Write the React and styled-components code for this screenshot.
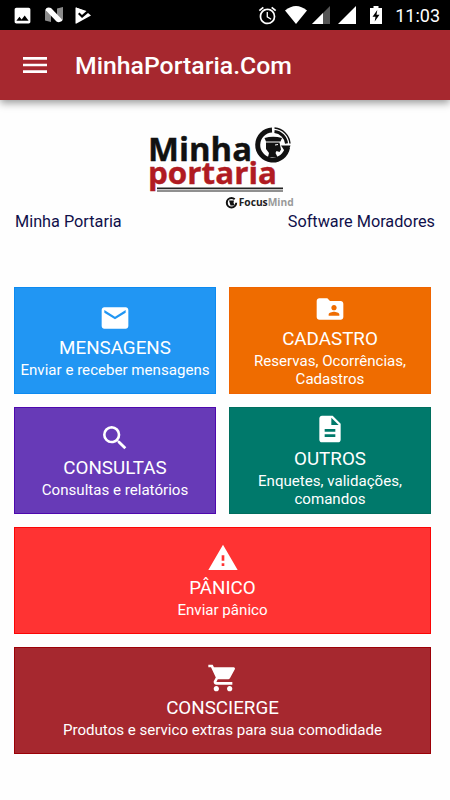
import React from "react"
import styled, { createGlobalStyle } from "styled-components"
import {
    MdMenu,
    MdEmail,
    MdFolderShared,
    MdSearch,
    MdDescription,
    MdWarning,
    MdShoppingCart,
    MdImage,
    MdAlarm,
} from "react-icons/md"

const tiles = [
    { title: "MENSAGENS", text: "Enviar e receber mensagens", color: "#2196f3", border: "#0d8af0", icon: MdEmail },
    { title: "CADASTRO", text: "Reservas, Ocorrências, Cadastros", color: "#ef6c00", border: "#ef6400", icon: MdFolderShared },
    { title: "CONSULTAS", text: "Consultas e relatórios", color: "#673ab7", border: "#4e08ae", icon: MdSearch },
    { title: "OUTROS", text: "Enquetes, validações, comandos", color: "#00796b", border: "#006e5e", icon: MdDescription },
    { title: "PÂNICO", text: "Enviar pânico", color: "#ff3333", border: "#fb0505", icon: MdWarning, wide: true },
    { title: "CONSCIERGE", text: "Produtos e servico extras para sua comodidade", color: "#a6282f", border: "#9b0007", icon: MdShoppingCart, wide: true },
]

function StatusBar() {
    return (
        <StatusContainer>
            <StatusGroup $gap="12px">
                <MdImage size={21} />
                <svg width="18" height="16" viewBox="0 0 18 16">
                    <path d="M0 2 L6 4 V15 L0 13.5Z M12 1.5 L18 0 V13.5 L12 12Z" fill="#8b8b8b" />
                    <path d="M1 1.5 Q3 0 6 1 L17 12.5 V14 Q14 16 11.5 14.5 L1 3.5Z" fill="#fff" />
                </svg>
                <svg width="17" height="17" viewBox="0 0 17 17">
                    <path d="M1 0.5 Q0.5 0.2 0.5 1 V16 Q0.5 17 1.5 16.5 L16 8.5 L13 6 L7 11 L3 7 L4.5 5.5 L7 8 L11.5 4 Z" fill="#fff" />
                    <path d="M1 0.5 L9.5 4 L7 6.5 L4.5 4.5 L1 7Z" fill="#fff" />
                </svg>
            </StatusGroup>
            <StatusGroup $gap="5px">
                <MdAlarm size={21} />
                <Wifi width="22" height="18" viewBox="0 0 22 18">
                    <path d="M0 4.5 Q11 -4.5 22 4.5 L11 18Z" fill="#fff" />
                </Wifi>
                <svg width="18" height="18" viewBox="0 0 18 18">
                    <path d="M0 18 L18 0 V18Z" fill="#555" />
                    <path d="M0 18 L11 7 V18Z" fill="#fff" />
                </svg>
                <SignalFull width="18" height="18" viewBox="0 0 18 18">
                    <path d="M0 18 L18 0 V18Z" fill="#fff" />
                </SignalFull>
                <Battery width="12" height="18" viewBox="0 0 12 18">
                    <path d="M3.5 0 H8.5 V2 H12 V18 H0 V2 H3.5Z" fill="#fff" />
                    <path d="M7.3 4 L2.5 10.7 H5.5 L4.7 15.5 L9.5 8.8 H6.5Z" fill="#000" />
                </Battery>
                <Clock>11:03</Clock>
            </StatusGroup>
        </StatusContainer>
    )
}

function Logo() {
    return (
        <svg width="150" height="90" viewBox="145 122 150 90" fontFamily="Open Sans, Noto Sans, sans-serif" fontWeight="700">
            <text x="148" y="184.3" fontSize="31" textLength="129" lengthAdjust="spacingAndGlyphs" fill="#b01b22" stroke="#b01b22" strokeWidth="0.4">portaria</text>
            <text x="148" y="161" fontSize="32" textLength="104" lengthAdjust="spacingAndGlyphs" fill="#111" stroke="#111" strokeWidth="0.4">Minha</text>
            <path d="M157 188.3 H283" stroke="#222" strokeWidth="1.7" />
            <path d="M157 191 H283" stroke="#222" strokeWidth="1" />

            {/* emblema */}
            <path d="M272 130 A15 15 0 1 0 287.5 147.5" fill="none" stroke="#111" strokeWidth="5" />
            <path d="M274.5 128 A17 17 0 0 1 290 143.5" fill="none" stroke="#111" strokeWidth="1.4" />
            <path d="M274.5 131.5 A13.5 13.5 0 0 1 286.5 143.5" fill="none" stroke="#111" strokeWidth="3" />
            <path d="M281 145.5 H290.5 L288 152 L284 150Z" fill="#111" />
            <path d="M264.5 138 Q273 135.5 282 138 L280.5 141.5 H266Z" fill="#111" />
            <path d="M266 142.5 H279.5 L281 149.5 L279.5 152 L276.5 151 L275.5 153 L277.5 157 H268 L269 153 L266 149Z" fill="#111" />
            <path d="M275 145 L278 144.5" fill="none" stroke="#fff" strokeWidth="1" />

            <circle cx="231.5" cy="202.7" r="4.7" fill="none" stroke="#111" strokeWidth="2" strokeDasharray="25 5" />
            <path d="M229 200.5 H234 L233.5 203 L235 205.5 H230.5Z" fill="#111" />
            <text x="238.7" y="206" fontSize="9.8" textLength="55" lengthAdjust="spacingAndGlyphs" fill="#222">
                Focus<tspan fill="#999">Mind</tspan>
            </text>
        </svg>
    )
}

function App() {
    return (
        <>
            <GlobalStyle />
            <Page>
                <StatusBar />
                <Navbar>
                    <MdMenu size={32} />
                    <h1>MinhaPortaria.Com</h1>
                </Navbar>
                <LogoBox>
                    <Logo />
                </LogoBox>
                <Info>
                    <span>Minha Portaria</span>
                    <span>Software Moradores</span>
                </Info>
                <Grid>
                    {tiles.map(({ title, text, color, border, icon: Icon, wide }) => (
                        <Tile key={title} $color={color} $border={border} $wide={wide}>
                            <Icon size={32} />
                            <h2>{title}</h2>
                            <p>{text}</p>
                        </Tile>
                    ))}
                </Grid>
            </Page>
        </>
    )
}

export default App

const GlobalStyle = createGlobalStyle`
    * {
        box-sizing: border-box;
    }
    body {
        margin: 0;
        background-color: #fefefe;
        font-family: Roboto, "Liberation Sans", sans-serif;
    }
    h1, h2, p {
        margin: 0;
        font-weight: 400;
    }
    svg {
        display: block;
        flex-shrink: 0;
    }
`

const Page = styled.div`
    width: 450px;
    height: 800px;
    overflow: hidden;
`

const StatusContainer = styled.header`
    height: 30px;
    padding: 0 10px 0 12px;
    display: flex;
    align-items: center;
    justify-content: space-between;
    background-color: #000;
    color: #fff;
`

const StatusGroup = styled.div`
    display: flex;
    align-items: center;
    gap: ${props => props.$gap};
`

const Wifi = styled.svg`
    margin-left: 2px;
`

const SignalFull = styled.svg`
    margin-left: 3px;
`

const Battery = styled.svg`
    margin: 0 8px 0 9px;
`

const Clock = styled.span`
    font-size: 18px;
    line-height: 30px;
    padding-top: 1px;
`

const Navbar = styled.nav`
    height: 70px;
    padding: 0 19px;
    display: flex;
    align-items: center;
    gap: 24px;
    background-color: #a6282f;
    color: #fff;
    box-shadow: 0 3px 8px rgba(0, 0, 0, .4);

    h1 {
        font-size: 24.8px;
        font-weight: 500;
        line-height: 32px;
        padding-top: 1px;
    }
`

const LogoBox = styled.div`
    padding: 22px 0 0 145px;
`

const Info = styled.div`
    height: 75px;
    padding: 0 15px;
    display: flex;
    justify-content: space-between;
    color: #10104a;
    font-size: 16.25px;
    line-height: 20px;
`

const Grid = styled.main`
    display: grid;
    grid-template-columns: 202px 202px;
    grid-auto-rows: 107px;
    gap: 13px;
    padding-left: 14px;
`

const Tile = styled.section`
    grid-column: ${props => (props.$wide ? "span 2" : "auto")};
    display: flex;
    flex-direction: column;
    align-items: center;
    justify-content: center;
    text-align: center;
    color: #fff;
    background-color: ${props => props.$color};
    border: 1px solid ${props => props.$border};

    h2 {
        font-size: 18.8px;
        line-height: 28px;
    }

    p {
        max-width: 100%;
        padding: 0 4px;
        font-size: 15.1px;
        line-height: 17.5px;
    }
`
